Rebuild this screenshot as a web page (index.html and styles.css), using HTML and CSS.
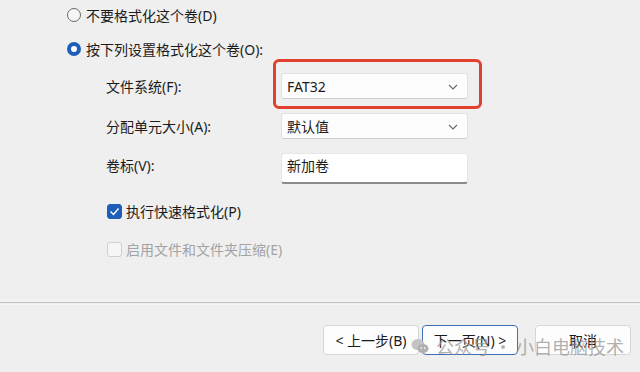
FILE: index.html
```html
<!DOCTYPE html>
<html lang="zh-CN">
<head>
    <meta charset="UTF-8">
    <title>格式化分区</title>
    <link rel="stylesheet" href="styles.css">
</head>
<body>
    <div class="main">
        <div class="radio-row first">
            <span class="radio"></span>
            <span>不要格式化这个卷(D)</span>
        </div>
        <div class="radio-row second">
            <span class="radio checked"></span>
            <span>按下列设置格式化这个卷(O):</span>
        </div>

        <div class="fields">
            <label>文件系统(F):</label>
            <div class="select highlight">
                <span>FAT32</span>
                <svg class="chevron" width="10" height="6" viewBox="0 0 10 6"><path d="M1 1l4 4 4-4" fill="none" stroke="#666" stroke-width="1.1"/></svg>
            </div>

            <label>分配单元大小(A):</label>
            <div class="select">
                <span>默认值</span>
                <svg class="chevron" width="10" height="6" viewBox="0 0 10 6"><path d="M1 1l4 4 4-4" fill="none" stroke="#666" stroke-width="1.1"/></svg>
            </div>

            <label class="label-top">卷标(V):</label>
            <div class="textbox">新加卷</div>
        </div>

        <div class="check-row quick">
            <span class="check checked">
                <svg width="11" height="9" viewBox="0 0 11 9"><path d="M1.5 4.5l3 3 5-6" fill="none" stroke="#fff" stroke-width="1.4"/></svg>
            </span>
            <span>执行快速格式化(P)</span>
        </div>
        <div class="check-row compress disabled">
            <span class="check"></span>
            <span>启用文件和文件夹压缩(E)</span>
        </div>
    </div>

    <div class="separator"></div>

    <div class="footer">
        <button class="btn">&lt; 上一步(B)</button>
        <button class="btn default">下一页(N) &gt;</button>
        <button class="btn cancel">取消</button>
    </div>

    <div class="watermark">
        <svg width="18" height="16" viewBox="0 0 18 16">
            <ellipse cx="7" cy="6.5" rx="6.5" ry="5.5" fill="#c4c4c4"/>
            <ellipse cx="12" cy="10.5" rx="5.5" ry="4.5" fill="#b0b0b0"/>
            <circle cx="10.3" cy="10" r="0.9" fill="#efefef"/>
            <circle cx="13.7" cy="10" r="0.9" fill="#efefef"/>
        </svg>
        <span>公众号 · 小白电脑技术</span>
    </div>
</body>
</html>
```

FILE: styles.css
```css
* {
    box-sizing: border-box;
    margin: 0;
    padding: 0;
}

body {
    width: 640px;
    height: 372px;
    overflow: hidden;
    background-color: #efefef;
    color: #1b1b1b;
    font-family: "Noto Sans", "Noto Sans CJK SC", sans-serif;
    font-size: 14px;
    position: relative;
}

.main {
    height: 302px;
    padding: 5px 0 0 67px;
}

.radio-row {
    display: flex;
    align-items: center;
    gap: 5px;
    height: 20px;
}

.radio-row.second {
    margin-top: 14px;
}

.radio {
    width: 14px;
    height: 14px;
    border-radius: 50%;
    border: 1px solid #6b6b6b;
    background: #f6f6f6;
}

.radio.checked {
    border: 4px solid #1d5fb8;
    background: #fff;
}

.fields {
    display: grid;
    grid-template-columns: 175px 187px;
    grid-template-rows: 26px 26px 31px;
    row-gap: 14px;
    margin: 14px 0 0 39px;
    align-items: center;
}

.fields .textbox {
    margin-top: -1px;
}

.label-top {
    align-self: start;
    padding-top: 2px;
}

.select {
    height: 26px;
    background: #fdfdfd;
    border: 1px solid #e2e2e2;
    border-bottom-color: #cfcfcf;
    border-radius: 3px;
    display: flex;
    align-items: center;
    justify-content: space-between;
    padding: 0 9px 0 5px;
}

.chevron {
    margin-top: 1px;
}

.highlight {
    position: relative;
}

.highlight::after {
    content: "";
    position: absolute;
    left: -9px;
    top: -15px;
    right: -15px;
    bottom: -11px;
    border: 3px solid #e0412e;
    border-radius: 6px;
}

.textbox {
    height: 31px;
    background: #fff;
    border: 1px solid #e6e6e6;
    border-bottom: 2px solid #8a8a8a;
    border-radius: 3px;
    padding: 1px 5px 0;
}

.check-row {
    display: flex;
    align-items: center;
    gap: 4px;
    margin-left: 40px;
    height: 16px;
}

.check-row.quick {
    margin-top: 19px;
}

.check-row.compress {
    margin-top: 22px;
}

.check {
    width: 15px;
    height: 15px;
    border-radius: 3px;
    border: 1px solid #cfcfcf;
    background: #f6f6f6;
    display: flex;
    align-items: center;
    justify-content: center;
}

.check.checked {
    background: #1d5fb8;
    border-color: #1d5fb8;
}

.disabled {
    color: #a3a3a3;
}

.separator {
    height: 1px;
    background: #c2c2c2;
    box-shadow: 0 -2px 0 #f7f7f7, 0 2px 0 #f7f7f7;
}

.footer {
    display: flex;
    justify-content: flex-end;
    padding: 22px 9px 0 0;
}

.btn {
    width: 96px;
    height: 30px;
    background: #fdfdfd;
    border: 1px solid #d6d6d6;
    border-radius: 4px;
    font-family: inherit;
    font-size: 14px;
    color: #1b1b1b;
}

.btn.default {
    margin-left: 3px;
    border: 1px solid #3d6fb6;
    box-shadow: inset 0 0 0 1px #fdfdfd;
}

.btn.cancel {
    margin-left: 17px;
}

.watermark {
    position: absolute;
    left: 411px;
    top: 333px;
    display: flex;
    align-items: center;
    gap: 7px;
    white-space: nowrap;
    font-family: "Noto Sans CJK SC", sans-serif;
    font-size: 18px;
    color: rgba(150, 150, 150, 0.75);
}
```
